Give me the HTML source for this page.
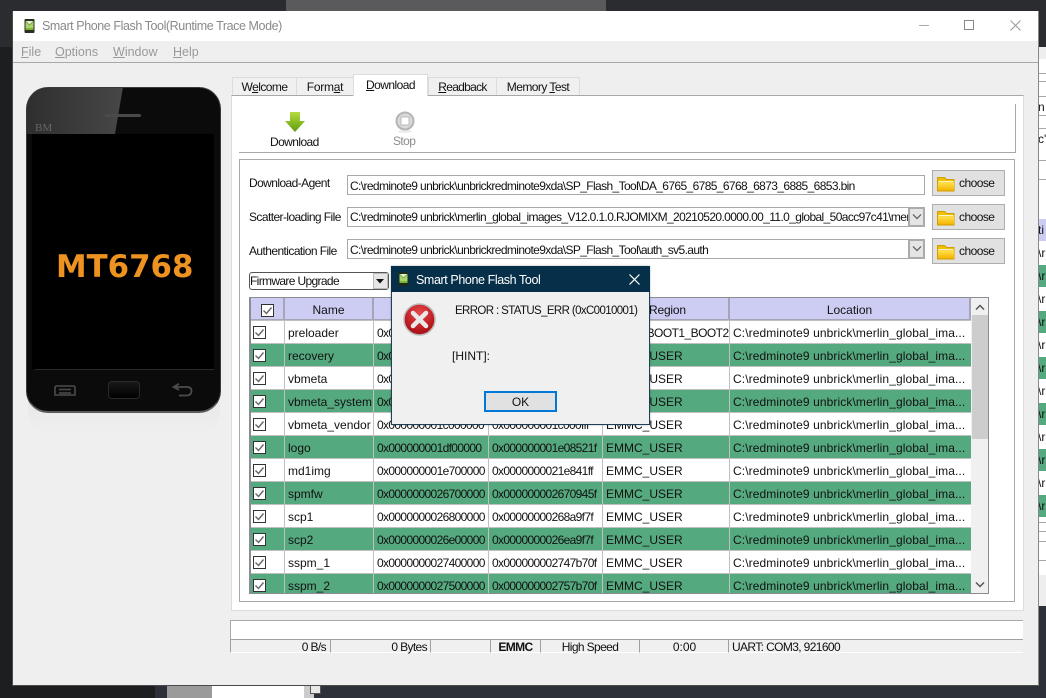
<!DOCTYPE html>
<html><head><meta charset="utf-8"><style>
html,body{margin:0;padding:0}
body{width:1046px;height:698px;position:relative;overflow:hidden;background:#1c1e20;font:12px "Liberation Sans",sans-serif;color:#111}
div,span,svg{position:absolute;box-sizing:border-box}
u{text-decoration:underline;text-underline-offset:1px}
.t{white-space:nowrap;line-height:14px}
.nr{letter-spacing:-.58px}
.tab{top:77px;height:18px;background:#f0f0f0;border:1px solid #dcdcdc;border-bottom:0;text-align:center;line-height:18px;letter-spacing:-.55px}
.inp{left:347px;width:578px;height:20px;background:#fff;border:1px solid #a9a9a9;line-height:18px;padding-left:2px;white-space:nowrap;overflow:hidden;letter-spacing:-.62px}
.arr{left:908px;width:17px;height:20px;background:#e4e4e4;border:2px solid #ababab}
.btn{left:932px;width:73px;height:26px;background:#e1e1e1;border:1px solid #adadad}
.btn span{left:26px;top:5px;line-height:14px;letter-spacing:-.55px}
.hd{top:298px;height:22px;background:#cdcdf4;border-right:2px solid #a5a5b8;border-bottom:1px solid #a5a5b8;text-align:center;line-height:24px}
.r{left:251px;width:720px;height:22px;background:#fff;line-height:24px;white-space:nowrap}
.g{background:#55a97f}
.r span{top:0;height:22px;padding-left:3px;overflow:hidden}
.r svg{left:2px;top:5px}
.r .a{left:34px;width:88px;padding-left:3px}
.r .b{left:123px;width:114px;letter-spacing:-.65px}
.r .c{left:238px;width:113px;letter-spacing:-.65px}
.r .d{left:352px;width:126px}
.r .e{left:479px;width:241px;letter-spacing:.1px}
.r i{position:absolute;top:0;width:1px;height:22px;background:#c0c0c0}
.s{left:1038px;width:8px;overflow:hidden;white-space:nowrap;line-height:22px}
.st{top:639px;height:14px;border-top:1px solid #a0a0a0;border-left:1px solid #a0a0a0;border-bottom:1px solid #fff;background:#f0f0f0;line-height:14px;white-space:nowrap;font-size:12px;letter-spacing:-.62px}
.ln{left:1038px;width:8px;height:1px;background:#a8a8a8}
</style></head><body>
<svg width="0" height="0" style="left:0;top:0"><defs>
<g id="c"><rect x=".5" y=".5" width="12" height="12" fill="#fff" stroke="#333"/><path d="M2.500 6.500 L5.500 9.500 L10.500 3.500" fill="none" stroke="#666" stroke-width="1.400"/></g>
<linearGradient id="fg" x1="0" x2="0" y1="0" y2="1"><stop offset="0" stop-color="#ffe14d"/><stop offset="1" stop-color="#f5b400"/></linearGradient>
<g id="f"><path d="M.5 3V1.500h7l2 2h7.500v11.500H.5z" fill="#f0c000" stroke="#cf9f00"/><path d="M1.500 5h15v1.200h-15z" fill="#fff4c0"/><path d="M1 6.500h16v8H1z" fill="url(#fg)"/></g>
</defs></svg>

<!-- background -->
<div style="left:0;top:0;width:1046px;height:47px;background:#2b2c30"></div>
<div style="left:286px;top:0;width:320px;height:11px;background:#5a5a5d"></div>
<div style="left:0;top:47px;width:13px;height:651px;background:#1c1e20"></div>
<div style="left:1038px;top:47px;width:8px;height:559px;background:#fff"></div>
<div style="left:1038px;top:47px;width:8px;height:12px;background:#eee"></div>
<div style="left:1038px;top:606px;width:8px;height:92px;background:#2d3038"></div>
<div style="left:155px;top:685px;width:891px;height:13px;background:#2d3038"></div>
<div style="left:167px;top:685px;width:45px;height:13px;background:#9a9a9a"></div>
<div style="left:212px;top:685px;width:92px;height:13px;background:#fff"></div>
<div style="left:304px;top:685px;width:10px;height:13px;background:#ccc"></div>
<div style="left:310px;top:685px;width:11px;height:9px;background:#e8e8e8;border:1px solid #555;border-top:0"></div>
<div class="ln" style="top:73px"></div><div class="ln" style="top:81px"></div><div class="ln" style="top:96px"></div><div class="ln" style="top:115px"></div><div class="ln" style="top:128px"></div><div class="ln" style="top:160px"></div><div class="ln" style="top:179px"></div>
<div class="s" style="top:96px">n</div><div class="s" style="top:128px">c'</div>
<div class="s" style="top:219px;height:22px;background:#cdcdf4">ti</div>
<div class="s" style="top:242px;height:22px">\r</div>
<div class="s" style="top:265px;height:22px;background:#55a97f">\r</div>
<div class="s" style="top:288px;height:22px">\r</div>
<div class="s" style="top:311px;height:22px;background:#55a97f">\r</div>
<div class="s" style="top:334px;height:22px">\r</div>
<div class="s" style="top:357px;height:22px;background:#55a97f">\r</div>
<div class="s" style="top:380px;height:22px">\r</div>
<div class="s" style="top:403px;height:22px;background:#55a97f">\r</div>
<div class="s" style="top:426px;height:22px">\r</div>
<div class="s" style="top:449px;height:22px;background:#55a97f">\r</div>
<div class="s" style="top:472px;height:22px">\r</div>
<div class="s" style="top:495px;height:22px;background:#55a97f">\r</div>
<div class="ln" style="top:522px"></div><div class="ln" style="top:531px"></div><div class="ln" style="top:541px"></div><div class="ln" style="top:560px"></div>
<div style="left:1038px;top:575px;width:8px;height:31px;background:#eee"></div>

<!-- window -->
<div style="left:12px;top:11px;width:1027px;height:675px;background:#efefef;border:1px solid #4a4a4a;border-top:0;border-right-color:#888"></div>
<div style="left:13px;top:11px;width:1025px;height:30px;background:#fff"></div>
<svg style="left:24px;top:19px" width="11" height="14" viewBox="0 0 10 14"><rect width="10" height="14" rx="1" fill="#2a2f22"/><rect x="1" y="2" width="8" height="9" fill="#a8d46a"/><path d="M1 2 L5 6 L9 2" fill="#e8f6d0" stroke="#5f8f3a" stroke-width=".7"/><rect x="1" y="9" width="8" height="2" fill="#7fb43c"/></svg>
<div class="t" style="left:42px;top:19px;color:#8a8a8a;font-size:12.5px;line-height:15px;letter-spacing:-.42px">Smart Phone Flash Tool(Runtime Trace Mode)</div>
<div style="left:919px;top:25px;width:10px;height:1px;background:#aaa"></div>
<div style="left:964px;top:20px;width:10px;height:10px;border:1px solid #888"></div>
<svg style="left:1010px;top:20px" width="11" height="11"><path d="M.5 .5L10.500 10.500M10.500 .5L.5 10.500" stroke="#999" fill="none"/></svg>
<div class="t" style="left:21px;top:45px;color:#999;font-size:12.5px"><u>F</u>ile</div>
<div class="t" style="left:55px;top:45px;color:#999;font-size:12.5px"><u>O</u>ptions</div>
<div class="t" style="left:113px;top:45px;color:#999;font-size:12.5px"><u>W</u>indow</div>
<div class="t" style="left:173px;top:45px;color:#999;font-size:12.5px"><u>H</u>elp</div>
<div style="left:13px;top:62px;width:1025px;height:1px;background:#a8a8a8"></div>

<!-- phone -->
<div style="left:28px;top:402px;width:192px;height:30px;background:linear-gradient(#e2e2e2,#efefef);border-radius:0 0 18px 18px;opacity:.5"></div>
<div style="left:26px;top:87px;width:195px;height:326px;background:#0b0b0b;border-radius:22px;border:1px solid #3a3a3a;border-bottom:2px solid #5a5a5a;overflow:hidden">
<svg style="left:-1px;top:-1px" width="195" height="60"><defs><linearGradient id="gl" x1="0" x2="1" y1="0" y2="0"><stop offset="0" stop-color="#2e2e2e"/><stop offset="1" stop-color="#474747"/></linearGradient></defs><path d="M0 0H97L89 47H0z" fill="url(#gl)"/></svg>
<div style="left:78px;top:26px;width:36px;height:3px;background:#4a4a4a;border-radius:2px"></div>
<div style="left:8px;top:33px;color:#666;font:11px 'Liberation Serif',serif;line-height:14px">BM</div>
<div style="left:5px;top:46px;width:182px;height:235px;background:#000"></div>
<div style="left:8px;top:281px;width:179px;height:1px;background:#2a2a2a"></div>
<div style="left:29px;top:164px;color:#ef9320;font:bold 30.8px 'DejaVu Sans',sans-serif;line-height:30px;white-space:nowrap">MT6768</div>
<svg style="left:27px;top:297px" width="22" height="11"><path d="M2.500 1H19.500a1.500 1.500 0 0 1 1.500 1.500V10H1V2.500A1.500 1.500 0 0 1 2.500 1zM5 4.500H17M5 8H17" fill="none" stroke="#4c4c4c" stroke-width="1.600"/></svg>
<div style="left:81px;top:293px;width:32px;height:18px;border:1px solid #2a2a2a;border-radius:4px;background:linear-gradient(#181818,#000)"></div>
<svg style="left:145px;top:295px" width="21" height="14"><path d="M1.500 4H15Q19.500 4 19.500 8T15 12.500H7M7 .8L1.500 4L7 6.800" fill="none" stroke="#4c4c4c" stroke-width="1.800"/></svg>
</div>

<!-- tabs -->
<div class="tab" style="left:232px;width:65px"><span style="position:static">W<u>e</u>lcome</span></div>
<div class="tab" style="left:296px;width:58px;letter-spacing:-.25px"><span style="position:static">Form<u>a</u>t</span></div>
<div class="tab" style="left:496px;width:84px"><span style="position:static">Memory <u>T</u>est</span></div>
<div class="tab" style="left:428px;width:69px;letter-spacing:-.7px"><span style="position:static"><u>R</u>eadback</span></div>
<div style="left:231px;top:95px;width:793px;height:516px;background:#fff;border:1px solid #dcdcdc;border-top:1px solid #a8a8a8"></div>
<div class="tab" style="left:353px;top:74px;width:75px;height:22px;background:#fff;line-height:20px"><span style="position:static"><u>D</u>ownload</span></div>

<!-- toolbar -->
<div style="left:239px;top:152px;width:776px;height:1px;background:#a8a8a8"></div>
<div style="left:1015px;top:104px;width:1px;height:49px;background:#a8a8a8"></div>
<svg style="left:285px;top:112px" width="20" height="21" viewBox="0 0 20 21"><defs><linearGradient id="ga" x1="0" x2="0" y1="0" y2="1"><stop offset="0" stop-color="#b7dc3e"/><stop offset="1" stop-color="#5d9c0d"/></linearGradient></defs><path d="M5 0H15V9H20L10 20L0 9H5z" fill="url(#ga)"/></svg>
<div class="t nr" style="left:270px;top:135px">Download</div>
<svg style="left:395px;top:111px" width="20" height="22"><circle cx="10" cy="10" r="8.500" fill="#d9d9d9" stroke="#b5b5b5" stroke-width="2"/><rect x="6" y="6" width="8" height="8" fill="#fff" stroke="#bbb"/><ellipse cx="10" cy="20.500" rx="7" ry="1.200" fill="#e8e8e8"/></svg>
<div class="t nr" style="left:393px;top:134px;color:#8c8c8c">Stop</div>

<!-- group -->
<div style="left:239px;top:159px;width:776px;height:443px;border:1px solid #a8a8a8"></div>
<div class="t nr" style="left:249px;top:176px">Download-Agent</div>
<div class="t nr" style="left:249px;top:210px">Scatter-loading File</div>
<div class="t nr" style="left:249px;top:244px">Authentication File</div>
<div class="inp" style="top:175px;line-height:20px">C:\redminote9 unbrick\unbrickredminote9xda\SP_Flash_Tool\DA_6765_6785_6768_6873_6885_6853.bin</div>
<div class="inp" style="top:207px;width:561px;border-right:0">C:\redminote9 unbrick\merlin_global_images_V12.0.1.0.RJOMIXM_20210520.0000.00_11.0_global_50acc97c41\merlin</div>
<div class="arr" style="top:207px"></div>
<svg style="left:912px;top:213px" width="10" height="8"><path d="M1 1.500L5 5.500L9 1.500" fill="none" stroke="#555" stroke-width="1.200"/></svg>
<div class="inp" style="top:239px;width:561px;border-right:0;line-height:20px">C:\redminote9 unbrick\unbrickredminote9xda\SP_Flash_Tool\auth_sv5.auth</div>
<div class="arr" style="top:239px"></div>
<svg style="left:912px;top:245px" width="10" height="8"><path d="M1 1.500L5 5.500L9 1.500" fill="none" stroke="#555" stroke-width="1.200"/></svg>
<div class="btn" style="top:170px"><svg style="left:4px;top:5px" width="18" height="16"><use href="#f"/></svg><span>choose</span></div>
<div class="btn" style="top:204px"><svg style="left:4px;top:5px" width="18" height="16"><use href="#f"/></svg><span>choose</span></div>
<div class="btn" style="top:238px"><svg style="left:4px;top:5px" width="18" height="16"><use href="#f"/></svg><span>choose</span></div>
<div style="left:249px;top:272px;width:140px;height:18px;background:#fff;border:1px solid #555;border-radius:3px;line-height:17px;white-space:nowrap;letter-spacing:-.65px">Firmware Upgrade</div>
<div style="left:373px;top:273px;width:15px;height:16px;background:#e6e6e6;border:1px solid #bbb"></div>
<svg style="left:376px;top:279px" width="9" height="5"><path d="M0 0H8L4 4.500z" fill="#111"/></svg>

<!-- table -->
<div style="left:249px;top:297px;width:740px;height:297px;border:1px solid #8c8c95;border-width:1px 1px 1px 2px;background:#f0f0f0;overflow:hidden">
<div style="left:0;top:0;width:720px;height:295px;background:#c0c0c0"></div>
</div>
<div class="hd" style="left:251px;width:34px"></div>
<svg style="left:261px;top:304px" width="13" height="13"><use href="#c"/></svg>
<div class="hd" style="left:285px;width:89px">Name</div>
<div class="hd" style="left:374px;width:115px">Begin Address</div>
<div class="hd" style="left:489px;width:114px">End Address</div>
<div class="hd" style="left:603px;width:127px;text-align:left;padding-left:46px;letter-spacing:-.2px">Region</div>
<div class="hd" style="left:730px;width:241px">Location</div>
<div style="left:251px;top:321px;width:720px;height:272px;overflow:hidden">
<div class="r" style="left:0;top:0"><svg width="13" height="13" style="left:2px;top:5px"><use href="#c"/></svg><i style="left:33px"></i><span class="a">preloader</span><i style="left:122px"></i><span class="b">0x0000000000000000</span><i style="left:237px"></i><span class="c">0x00000000000388df</span><i style="left:351px"></i><span class="d" style="letter-spacing:-.55px">EMMC_BOOT1_BOOT2</span><i style="left:478px"></i><span class="e">C:\redminote9 unbrick\merlin_global_ima...</span></div>
<div class="r g" style="left:0;top:23px"><svg width="13" height="13" style="left:2px;top:5px"><use href="#c"/></svg><i style="left:33px"></i><span class="a">recovery</span><i style="left:122px"></i><span class="b">0x0000000008000000</span><i style="left:237px"></i><span class="c">0x000000000a0a1fff</span><i style="left:351px"></i><span class="d">EMMC_USER</span><i style="left:478px"></i><span class="e">C:\redminote9 unbrick\merlin_global_ima...</span></div>
<div class="r" style="left:0;top:46px"><svg width="13" height="13" style="left:2px;top:5px"><use href="#c"/></svg><i style="left:33px"></i><span class="a">vbmeta</span><i style="left:122px"></i><span class="b">0x000000001b000000</span><i style="left:237px"></i><span class="c">0x000000001b000fff</span><i style="left:351px"></i><span class="d">EMMC_USER</span><i style="left:478px"></i><span class="e">C:\redminote9 unbrick\merlin_global_ima...</span></div>
<div class="r g" style="left:0;top:69px"><svg width="13" height="13" style="left:2px;top:5px"><use href="#c"/></svg><i style="left:33px"></i><span class="a">vbmeta_system</span><i style="left:122px"></i><span class="b">0x000000001b800000</span><i style="left:237px"></i><span class="c">0x000000001b800fff</span><i style="left:351px"></i><span class="d">EMMC_USER</span><i style="left:478px"></i><span class="e">C:\redminote9 unbrick\merlin_global_ima...</span></div>
<div class="r" style="left:0;top:92px"><svg width="13" height="13" style="left:2px;top:5px"><use href="#c"/></svg><i style="left:33px"></i><span class="a">vbmeta_vendor</span><i style="left:122px"></i><span class="b">0x000000001c000000</span><i style="left:237px"></i><span class="c">0x000000001c000fff</span><i style="left:351px"></i><span class="d">EMMC_USER</span><i style="left:478px"></i><span class="e">C:\redminote9 unbrick\merlin_global_ima...</span></div>
<div class="r g" style="left:0;top:115px"><svg width="13" height="13" style="left:2px;top:5px"><use href="#c"/></svg><i style="left:33px"></i><span class="a">logo</span><i style="left:122px"></i><span class="b">0x000000001df00000</span><i style="left:237px"></i><span class="c">0x000000001e08521f</span><i style="left:351px"></i><span class="d">EMMC_USER</span><i style="left:478px"></i><span class="e">C:\redminote9 unbrick\merlin_global_ima...</span></div>
<div class="r" style="left:0;top:138px"><svg width="13" height="13" style="left:2px;top:5px"><use href="#c"/></svg><i style="left:33px"></i><span class="a">md1img</span><i style="left:122px"></i><span class="b">0x000000001e700000</span><i style="left:237px"></i><span class="c">0x0000000021e841ff</span><i style="left:351px"></i><span class="d">EMMC_USER</span><i style="left:478px"></i><span class="e">C:\redminote9 unbrick\merlin_global_ima...</span></div>
<div class="r g" style="left:0;top:161px"><svg width="13" height="13" style="left:2px;top:5px"><use href="#c"/></svg><i style="left:33px"></i><span class="a">spmfw</span><i style="left:122px"></i><span class="b">0x0000000026700000</span><i style="left:237px"></i><span class="c">0x000000002670945f</span><i style="left:351px"></i><span class="d">EMMC_USER</span><i style="left:478px"></i><span class="e">C:\redminote9 unbrick\merlin_global_ima...</span></div>
<div class="r" style="left:0;top:184px"><svg width="13" height="13" style="left:2px;top:5px"><use href="#c"/></svg><i style="left:33px"></i><span class="a">scp1</span><i style="left:122px"></i><span class="b">0x0000000026800000</span><i style="left:237px"></i><span class="c">0x00000000268a9f7f</span><i style="left:351px"></i><span class="d">EMMC_USER</span><i style="left:478px"></i><span class="e">C:\redminote9 unbrick\merlin_global_ima...</span></div>
<div class="r g" style="left:0;top:207px"><svg width="13" height="13" style="left:2px;top:5px"><use href="#c"/></svg><i style="left:33px"></i><span class="a">scp2</span><i style="left:122px"></i><span class="b">0x0000000026e00000</span><i style="left:237px"></i><span class="c">0x0000000026ea9f7f</span><i style="left:351px"></i><span class="d">EMMC_USER</span><i style="left:478px"></i><span class="e">C:\redminote9 unbrick\merlin_global_ima...</span></div>
<div class="r" style="left:0;top:230px"><svg width="13" height="13" style="left:2px;top:5px"><use href="#c"/></svg><i style="left:33px"></i><span class="a">sspm_1</span><i style="left:122px"></i><span class="b">0x0000000027400000</span><i style="left:237px"></i><span class="c">0x000000002747b70f</span><i style="left:351px"></i><span class="d">EMMC_USER</span><i style="left:478px"></i><span class="e">C:\redminote9 unbrick\merlin_global_ima...</span></div>
<div class="r g" style="left:0;top:253px"><svg width="13" height="13" style="left:2px;top:5px"><use href="#c"/></svg><i style="left:33px"></i><span class="a">sspm_2</span><i style="left:122px"></i><span class="b">0x0000000027500000</span><i style="left:237px"></i><span class="c">0x000000002757b70f</span><i style="left:351px"></i><span class="d">EMMC_USER</span><i style="left:478px"></i><span class="e">C:\redminote9 unbrick\merlin_global_ima...</span></div>
</div>
<!-- scrollbar -->
<div style="left:972px;top:315px;width:16px;height:124px;background:#cdcdcd"></div>
<svg style="left:975px;top:304px" width="10" height="7"><path d="M1 5.500L5 1.500L9 5.500" fill="none" stroke="#555" stroke-width="1.500"/></svg>
<svg style="left:975px;top:581px" width="10" height="7"><path d="M1 1.500L5 5.500L9 1.500" fill="none" stroke="#555" stroke-width="1.500"/></svg>

<!-- status -->
<div style="left:230px;top:620px;width:793px;height:20px;background:#fff;border-top:1px solid #a8a8a8;border-left:1px solid #a8a8a8"></div>
<div class="st" style="left:230px;width:100px;text-align:right;padding-right:4px">0 B/s</div>
<div class="st" style="left:330px;width:100px;text-align:right;padding-right:3px">0 Bytes</div>
<div class="st" style="left:430px;width:60px"></div>
<div class="st" style="left:490px;width:50px;text-align:center;font-weight:bold">EMMC</div>
<div class="st" style="left:540px;width:99px;text-align:center">High Speed</div>
<div class="st" style="left:639px;width:90px;text-align:center;letter-spacing:0">0:00</div>
<div class="st" style="left:728px;width:295px;padding-left:3px">UART: COM3, 921600</div>

<!-- dialog -->
<div style="left:391px;top:266px;width:259px;height:159px;background:#f0f0f0;border:1px solid #1d4258;box-shadow:0 0 2px rgba(0,0,0,.3)"></div>
<div style="left:391px;top:266px;width:259px;height:26px;background:#06304a"></div>
<svg style="left:398px;top:272px" width="11" height="14" viewBox="0 0 10 14"><rect width="10" height="14" rx="1" fill="#1e2a20"/><rect x="1" y="2" width="8" height="9" fill="#a8d46a"/><path d="M1 2 L5 6 L9 2" fill="#e8f6d0" stroke="#5f8f3a" stroke-width=".7"/><rect x="1" y="9" width="8" height="2" fill="#7fb43c"/></svg>
<div class="t" style="left:416px;top:272px;color:#fff;font-size:12.5px;line-height:16px;letter-spacing:-.4px">Smart Phone Flash Tool</div>
<svg style="left:629px;top:274px" width="11" height="11"><path d="M.5 .5L10.500 10.500M10.500 .5L.5 10.500" stroke="#fff" fill="none" stroke-width="1.200"/></svg>
<svg style="left:403px;top:303px" width="33" height="33" viewBox="0 0 33 33"><defs><radialGradient id="rd" cx=".5" cy=".3" r=".8"><stop offset="0" stop-color="#e8484c"/><stop offset=".7" stop-color="#b5161c"/><stop offset="1" stop-color="#8c0f14"/></radialGradient></defs><circle cx="16.500" cy="16.500" r="15.500" fill="url(#rd)" stroke="#b9b9b9" stroke-width="1.500"/><path d="M10 10L23 23M23 10L10 23" stroke="#e9e9e9" stroke-width="4.500" stroke-linecap="round"/></svg>
<div class="t" style="left:455px;top:304px;font-size:11.5px;letter-spacing:-.62px">ERROR : STATUS_ERR (0xC0010001)</div>
<div class="t" style="left:452px;top:349px">[HINT]:</div>
<div style="left:484px;top:391px;width:73px;height:21px;background:#e1e1e1;border:2px solid #0078d7;text-align:center;line-height:19px">OK</div>
</body></html>
